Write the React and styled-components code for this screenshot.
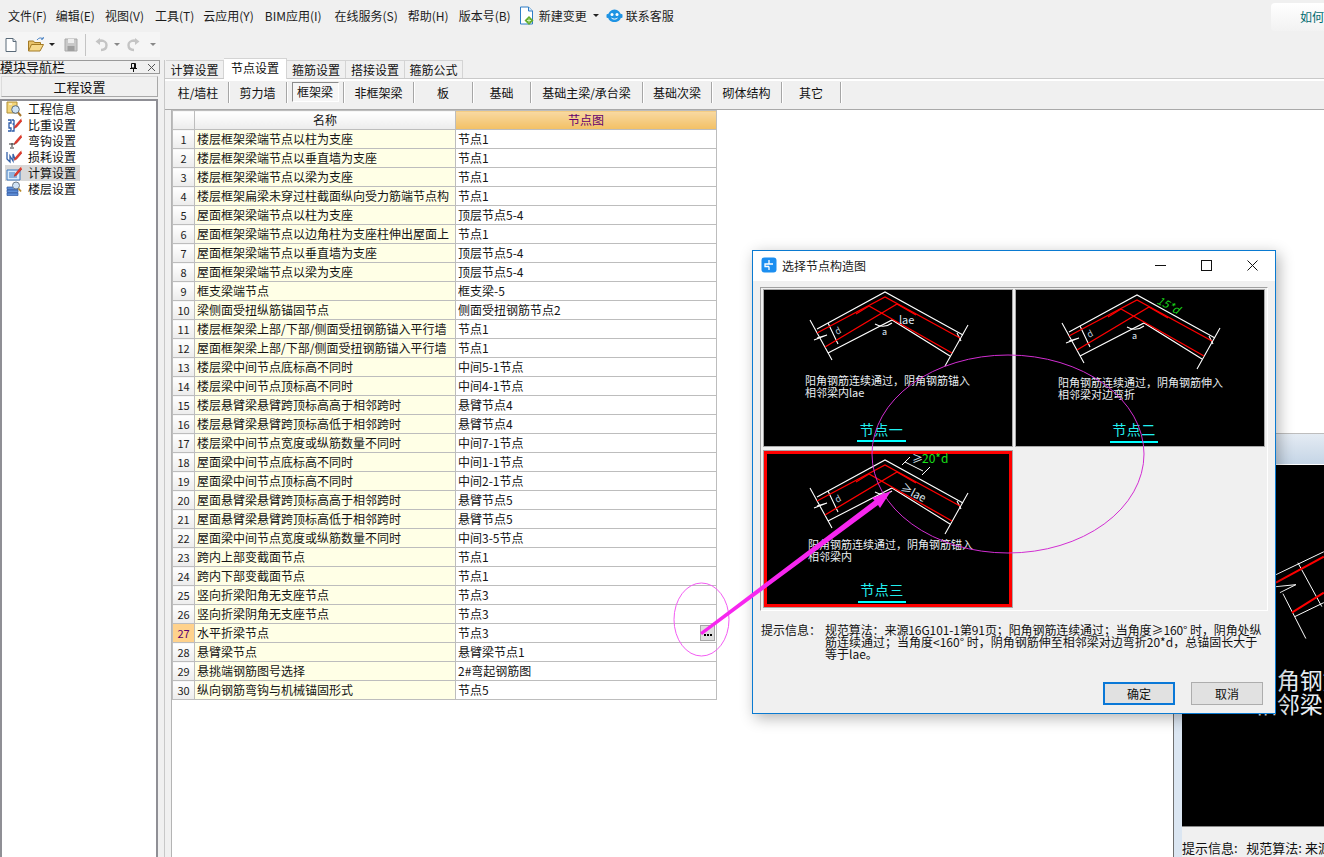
import React from "react";
import styled, { createGlobalStyle } from "styled-components";

const CJK = `"Noto Sans CJK SC", "Liberation Sans", sans-serif`;

const Global = createGlobalStyle`
  html, body { margin: 0; padding: 0; background: #f0f0f0; }
  body { font-family: ${CJK}; font-size: 12px; color: #111; }
  * { box-sizing: border-box; }
`;

const Page = styled.div`
  position: relative;
  width: 1324px;
  height: 857px;
  overflow: hidden;
  background: #f0f0f0;
  display: flex;
  flex-direction: column;
`;

/* ---------- menu ---------- */
const MenuBar = styled.div`
  height: 31px;
  flex: none;
  display: flex;
  align-items: center;
  padding-left: 8px;
  line-height: 16px;
`;
const MenuItem = styled.span`
  margin-right: ${(p) => p.$gap ?? 11}px;
  white-space: nowrap;
  color: #1c1c1c;
`;
const MenuIcon = styled.span`
  display: inline-flex;
  margin-right: ${(p) => p.$gap ?? 5}px;
`;
const HowTo = styled.div`
  margin-left: auto;
  width: 53px;
  height: 28px;
  margin-top: 2px;
  border-radius: 4px 0 0 4px;
  background: linear-gradient(#ffffff, #f2f2f2);
  color: #006b70;
  padding: 6px 0 0 29px;
  white-space: nowrap;
  overflow: hidden;
`;
const ToolRow = styled.div`
  height: 29px;
  flex: none;
  padding-top: 1px;
`;
const ToolBar = styled.div`
  width: 160px;
  height: 25px;
  background: #f5f5f5;
  display: flex;
  align-items: center;
  padding-left: 3px;
`;
const ToolSpacer = styled.span`
  width: 8px;
  flex: none;
`;
const ToolSep = styled.span`
  width: 1px;
  height: 22px;
  background: #c4c4c4;
  margin: 0 7px 0 6px;
`;
const Caret = styled.span`
  width: 0;
  height: 0;
  border-left: 3px solid transparent;
  border-right: 3px solid transparent;
  border-top: 3px solid ${(p) => p.$color || "#222"};
  margin: ${(p) => p.$m || "0 8px 0 4px"};
`;

/* ---------- workspace ---------- */
const Workspace = styled.div`
  flex: 1;
  display: flex;
  min-height: 0;
`;
const Nav = styled.div`
  width: 160px;
  flex: none;
  display: flex;
  flex-direction: column;
`;
const NavHeader = styled.div`
  height: 14px;
  border: 1px solid #9a9a9a;
  border-width: 1px 1px 1px 0;
  display: flex;
  align-items: center;
  font-size: 13px;
  line-height: 12px;
  padding-right: 3px;
  white-space: nowrap;
`;
const NavHeaderBtns = styled.span`
  margin-left: auto;
  display: flex;
  align-items: center;
  gap: 9px;
`;
const NavTitleBtn = styled.div`
  height: 21px;
  margin: 2px 2px 2px 1px;
  border: 1px solid #a8a8a8;
  border-top-color: #dcdcdc;
  border-left-color: #dcdcdc;
  background: #f0f0f0;
  text-align: center;
  font-size: 13px;
  line-height: 19px;
`;
const Tree = styled.div`
  flex: 1;
  margin-right: 2px;
  background: #fff;
  border: 2px solid #8f8f95;
  border-bottom: none;
  padding: 0 0 0 3px;
`;
const TreeRow = styled.div`
  height: 16px;
  display: flex;
  align-items: center;
  gap: 6px;
  width: 75px;
  line-height: 16px;
  padding-left: 1px;
  background: ${(p) => (p.$selected ? "#d9d9d9" : "transparent")};
  white-space: nowrap;
`;
const Gutter = styled.div`
  width: 5px;
  flex: none;
  border-right: 1px solid #c8c8c8;
`;
const Main = styled.div`
  flex: 1;
  min-width: 0;
  display: flex;
  flex-direction: column;
`;
const TabStrip = styled.div`
  height: 19px;
  flex: none;
  display: flex;
  align-items: flex-end;
  padding-left: 1px;
  border-bottom: 1px solid #c9c9c9;
`;
const Tab = styled.div`
  width: ${(p) => p.$w}px;
  height: ${(p) => (p.$active ? 21 : 18)}px;
  margin-bottom: ${(p) => (p.$active ? -1 : 0)}px;
  border: 1px solid #d4d4d4;
  border-width: 1px 1px 0 0;
  background: ${(p) => (p.$active ? "#fff" : "#f0f0f0")};
  text-align: center;
  line-height: 17px;
  position: relative;
  white-space: nowrap;
`;
const SubBar = styled.div`
  height: 31px;
  flex: none;
  border-top: 2px solid #fff;
  border-bottom: 1px solid #a9a9a9;
  display: flex;
  padding-left: 3px;
  padding-top: 1px;
`;
const SubTab = styled.div`
  width: ${(p) => p.$w}px;
  height: 21px;
  border-right: 1px solid #a6a6a6;
  box-shadow: 1px 0 0 #fff;
  text-align: center;
  line-height: 21px;
  white-space: nowrap;
`;
const Pressed = styled.div`
  width: 47px;
  height: 20px;
  margin: 0 auto;
  border: 1px solid #8c8c8c;
  border-right-color: #fff;
  border-bottom-color: #fff;
  background: #f6f6f6;
  line-height: 18px;
`;
const Content = styled.div`
  flex: 1;
  display: flex;
  min-height: 0;
`;
const ContentStrip = styled.div`
  width: 7px;
  flex: none;
  border-right: 1px solid #b4b4b4;
`;
const Sheet = styled.div`
  flex: 1;
  background: #fff;
`;

/* ---------- table ---------- */
const Grid = styled.table`
  border-collapse: collapse;
  table-layout: fixed;
  width: 545px;
  color: #141414;
  td, th {
    border: 1px solid #bdbdbd;
    height: 19px;
    padding: 0 0 1px;
    font-weight: 400;
    line-height: 16px;
    white-space: nowrap;
    overflow: hidden;
  }
`;
const HeadIdx = styled.th`
  width: 22px;
  background: linear-gradient(#fff, #ececec);
`;
const HeadName = styled.th`
  width: 261px;
  background: linear-gradient(#fff, #ececec);
`;
const HeadNode = styled.th`
  width: 261px;
  background: linear-gradient(#f8d9a2, #f2c064);
  color: #64006e;
`;
const Idx = styled.td`
  text-align: center;
  font-size: 11px;
  color: ${(p) => (p.$selected ? "#5a0070" : "#222")};
  background: ${(p) =>
    p.$selected ? "#ffd28c" : "linear-gradient(#fff, #ececec)"};
`;
const Name = styled.td`
  background: #ffffe6;
  padding-left: 2px !important;
`;
const Val = styled.td`
  background: #fff;
  padding-left: 2px !important;
  position: relative;
`;
const DotsBtn = styled.span`
  position: absolute;
  right: 1px;
  top: 1px;
  width: 15px;
  height: 16px;
  background: #dedede;
  border: 1px solid #a8a8a8;
  display: flex;
  align-items: center;
  justify-content: center;
  gap: 1px;
  i {
    width: 2px;
    height: 2px;
    background: #000;
    display: block;
    margin-top: 3px;
  }
`;

/* ---------- window behind ---------- */
const BackWindow = styled.div`
  position: absolute;
  left: 1173px;
  top: 433px;
  width: 151px;
  height: 424px;
  border-left: 1px solid #6f6f6f;
  border-top: 1px solid #bdbdbd;
  background: #dbe6f2;
  display: flex;
  flex-direction: column;
`;
const BackTitle = styled.div`
  height: 31px;
  flex: none;
  background: linear-gradient(#e4ebf3, #c5d5e6);
  border-bottom: 1px solid #fff;
`;
const BackBody = styled.div`
  flex: 1;
  min-height: 0;
  display: flex;
`;
const BackSide = styled.div`
  width: 8px;
  flex: none;
  background: #dbe6f2;
`;
const BackCanvas = styled.div`
  flex: 1;
  min-width: 0;
  display: flex;
  flex-direction: column;
`;
const BackImage = styled.svg`
  display: block;
  width: 142px;
  height: 362px;
  flex: none;
  background: #000;
  border-bottom: 1px solid #888;
`;
const BackInfo = styled.div`
  flex: 1;
  background: #f0f0f0;
  font-size: 13px;
  line-height: 16px;
  white-space: pre;
  padding: 13px 0 0 0;
  overflow: hidden;
  color: #111;
`;

/* ---------- dialog ---------- */
const Dialog = styled.div`
  position: absolute;
  left: 752px;
  top: 250px;
  width: 524px;
  height: 464px;
  background: #f0f0f0;
  border: 1px solid #0a7ad1;
  box-shadow: 3px 4px 14px rgba(0, 0, 0, 0.3);
  display: flex;
  flex-direction: column;
`;
const TitleBar = styled.div`
  height: 30px;
  flex: none;
  background: #fff;
  display: flex;
  align-items: center;
  padding: 0 0 2px 8px;
  gap: 5px;
`;
const TitleText = styled.span`
  color: #1a1a1a;
`;
const WinBtns = styled.div`
  margin-left: auto;
  display: flex;
  align-items: center;
  height: 100%;
`;
const WinBtn = styled.span`
  width: 46px;
  display: flex;
  justify-content: center;
`;
const Gallery = styled.div`
  margin: 6px 7px 0;
  height: 324px;
  border: 1px solid;
  border-color: #a0a0a0 #fff #fff #a0a0a0;
  padding: 2px 3px;
  display: grid;
  grid-template-columns: 248px 248px;
  grid-template-rows: 156px 156px;
  gap: 5px 4px;
  flex: none;
`;
const Cell = styled.div`
  background: #000;
  box-shadow: ${(p) =>
    p.$selected
      ? "inset 0 0 0 3px #ff0000, 0 0 0 1px #a8a8a8"
      : "0 0 0 1px #a8a8a8"};
`;
const CellSvg = styled.svg`
  display: block;
  width: 248px;
  height: 156px;
  text {
    font-family: ${CJK};
  }
`;
const Hint = styled.div`
  display: flex;
  margin: 13px 0 0 8px;
  line-height: 12px;
`;
const HintLabel = styled.div`
  width: 64px;
  flex: none;
`;
const HintBody = styled.div`
  white-space: nowrap;
`;
const HintLine = styled.div`
  letter-spacing: ${(p) => p.$spacing || 0}px;
`;
const Footer = styled.div`
  margin-top: auto;
  padding: 0 12px 8px 0;
  display: flex;
  justify-content: flex-end;
  gap: 16px;
`;
const DlgBtn = styled.div`
  width: 72px;
  height: 23px;
  background: #e1e1e1;
  border: ${(p) => (p.$primary ? "2px solid #0a78d7" : "1px solid #adadad")};
  text-align: center;
  line-height: ${(p) => (p.$primary ? 19 : 21)}px;
  color: #111;
`;

const Annotations = styled.svg`
  position: absolute;
  left: 0;
  top: 0;
  width: 1324px;
  height: 857px;
  pointer-events: none;
`;

/* ---------- icons ---------- */
const Svg = ({ s = 16, w, h, children }) => (
  <svg width={w || s} height={h || s} viewBox={`0 0 ${w || s} ${h || s}`} style={{ display: "block", flex: "none" }}>
    {children}
  </svg>
);

const NewFile = () => (
  <Svg>
    <path d="M3 1.5h7l3 3v10H3z" fill="#fff" stroke="#5a6a78" />
    <path d="M10 1.5v3h3" fill="#dfe6ee" stroke="#5a6a78" />
  </Svg>
);
const OpenFolder = () => (
  <Svg s={18}>
    <path d="M1.5 15V5h5l1 1.5h6V9" fill="#e8c26a" stroke="#a37a25" />
    <path d="M1.5 15l3-6.5h12L13 15z" fill="#f6d98c" stroke="#a37a25" />
    <path d="M10 4c2-2.5 4-2.5 6-1M16 3l.3-2M16 3l-2 .2" fill="none" stroke="#3a78c0" />
  </Svg>
);
const SaveIcon = () => (
  <Svg>
    <path d="M2 2h12v12H2z" fill="#c9c9c9" stroke="#a9a9a9" />
    <path d="M5 2h6v4H5z" fill="#eee" />
    <path d="M4.5 9h7v5h-7z" fill="#9f9f9f" />
  </Svg>
);
const Undo = ({ flip }) => (
  <Svg>
    <g transform={flip ? "translate(16 0) scale(-1 1)" : undefined}>
      <path d="M8 13c4 0 5.5-2.5 5.5-5S11 3.5 8 3.5L6 4.5" fill="none" stroke="#c4c4c4" strokeWidth="2.4" />
      <path d="M7 1v7L2.5 4.5z" fill="#c4c4c4" />
    </g>
  </Svg>
);
const Pencil = () => (
  <g>
    <path d="M9 9l6-7 1.5 1.3-6 7-2.2 1z" fill="#e8392c" stroke="#a81d14" strokeWidth=".5" />
    <path d="M14.5 2.6l1-1.2 1.3 1.2-1 1.2z" fill="#f3b9a5" />
  </g>
);
const InfoIco = () => (
  <Svg>
    <path d="M1 1h10v11H1z" fill="#f4d67a" stroke="#b08e36" />
    <circle cx="9.5" cy="8.5" r="3.8" fill="#cfe4f5" stroke="#5b6b7b" />
    <path d="M12 11.5l3 3.5" stroke="#a8762a" strokeWidth="2" />
    <path d="M3 3h3" stroke="#fff" />
  </Svg>
);
const WeightIco = () => (
  <Svg>
    <path d="M2 3h3v3H3v5h2v3H2M8 3H6M8 3v4H6.5M8 7v7H6" fill="none" stroke="#2b5aa8" strokeWidth="1.3" />
    <Pencil />
  </Svg>
);
const HookIco = () => (
  <Svg>
    <path d="M6 10v4M4 15h4M3 11h6" fill="none" stroke="#333" />
    <Pencil />
  </Svg>
);
const LossIco = () => (
  <Svg>
    <path d="M1 3v7l3 3V7l3 5V5l2 5" fill="none" stroke="#3561a8" strokeWidth="1.3" />
    <Pencil />
  </Svg>
);
const CalcIco = () => (
  <Svg>
    <path d="M1 5h13v10H1z" fill="#d9ebfb" stroke="#3d79bf" />
    <path d="M3 8h6M3 10h8M3 12h8" stroke="#3d79bf" />
    <Pencil />
  </Svg>
);
const FloorIco = () => (
  <Svg>
    <path d="M1 6h11v2.5H1zM1 9h11v2.5H1zM1 12h11v2.5H1z" fill="#5f8fd8" stroke="#2c58a5" strokeWidth=".7" />
    <circle cx="10" cy="4.5" r="3.5" fill="#cfe2f5" stroke="#6c7a88" />
    <path d="M12.5 7.5l2.5 3" stroke="#b88a2a" strokeWidth="1.8" />
  </Svg>
);
const DocGreen = () => (
  <Svg w={15} h={20}>
    <path d="M1.5 1h8l4 4v13h-12z" fill="#fff" stroke="#2e7dc6" />
    <path d="M9.5 1v4h4" fill="#d3e6f6" stroke="#2e7dc6" />
    <path d="M10 10l4.5 4.5L10 19l-4.5-4.5z" fill="#65ad2e" />
    <path d="M10 12.5v4M8 14.5h4" stroke="#d6f0bd" />
  </Svg>
);
const BlueBot = () => (
  <Svg w={17} h={17}>
    <path d="M2 9a6.5 6.5 0 0 1 13 0c0 3.5-2 6-6.5 6S2 12.5 2 9z" fill="#1f93e3" />
    <rect x="0.5" y="7" width="2.5" height="4" rx="1" fill="#1f93e3" />
    <rect x="14" y="7" width="2.5" height="4" rx="1" fill="#1f93e3" />
    <circle cx="6" cy="7.5" r="1.5" fill="#fff" />
    <circle cx="11" cy="7.5" r="1.5" fill="#fff" />
    <path d="M5.5 11c1.5 1.5 4.5 1.5 6 0" fill="none" stroke="#fff" />
  </Svg>
);
const PinIco = () => (
  <Svg s={9}>
    <path d="M2.5 0.5h4v4.5h-4zM1 5.5h7M4.5 5.5V9M5.5 1v4" fill="none" stroke="#111" />
  </Svg>
);
const CloseSmall = () => (
  <Svg s={9}>
    <path d="M1 1l7 7M8 1L1 8" stroke="#555" />
  </Svg>
);
const DlgLogo = () => (
  <Svg>
    <rect x=".5" y=".5" width="15" height="15" rx="3" fill="#1b8ef0" />
    <path d="M8 3v4H4v2.5h4M8 9.5V13M8 7h4" fill="none" stroke="#fff" strokeWidth="1.3" />
  </Svg>
);

/* ---------- node drawings ---------- */
const BEAMS = {
  1: { x: 0, y: -3 },
  2: { x: 0, y: 0 },
  3: { x: 0, y: 4 },
};

const BeamLines = ({ dx, dy }) => (
  <g transform={`translate(${dx} ${dy})`} fill="none">
    <g stroke="#fff" strokeWidth="1.1">
      <path d="M53 42L121 5L199 48" />
      <path d="M64 66L128 33L186 69" />
      <path d="M46 33L68 73M64 36L74 57M204 38L181 79" />
      <path d="M50 53L63 48L53 51M193 46L197 54" />
      <path d="M111 37Q120 42 128 36" />
    </g>
    <g stroke="#ff0000" strokeWidth="1.3">
      <path d="M53 46L121 10L196 51" />
      <path d="M61 60L133 17L152 28" />
      <path d="M92 27L105 19L188 66" />
    </g>
    <text x="73" y="48" fontSize="9" fill="#bcd" transform="rotate(-28 73 48)">d</text>
  </g>
);

const NodeDrawing = ({ id, lines, title, tx, ty, ux, uw, uy, titleY, extra, lineStep }) => (
  <CellSvg viewBox="0 0 248 156">
    <BeamLines dx={BEAMS[id].x} dy={BEAMS[id].y} />
    {extra}
    {lines.map((l, i) => (
      <text key={l} x={tx} y={ty + i * lineStep} fontSize="11" fill="#e9eef2">
        {l}
      </text>
    ))}
    <text x={ux + uw / 2} y={titleY} fontSize="14" fill="#22f0f0" textAnchor="middle" letterSpacing="0.5">
      {title}
    </text>
    <rect x={ux} y={uy} width={uw} height="2" fill="#00ffff" />
  </CellSvg>
);

const rows = [
  ["楼层框架梁端节点以柱为支座", "节点1"],
  ["楼层框架梁端节点以垂直墙为支座", "节点1"],
  ["楼层框架梁端节点以梁为支座", "节点1"],
  ["楼层框架扁梁未穿过柱截面纵向受力筋端节点构", "节点1"],
  ["屋面框架梁端节点以柱为支座", "顶层节点5-4"],
  ["屋面框架梁端节点以边角柱为支座柱伸出屋面上", "节点1"],
  ["屋面框架梁端节点以垂直墙为支座", "顶层节点5-4"],
  ["屋面框架梁端节点以梁为支座", "顶层节点5-4"],
  ["框支梁端节点", "框支梁-5"],
  ["梁侧面受扭纵筋锚固节点", "侧面受扭钢筋节点2"],
  ["楼层框架梁上部/下部/侧面受扭钢筋锚入平行墙", "节点1"],
  ["屋面框架梁上部/下部/侧面受扭钢筋锚入平行墙", "节点1"],
  ["楼层梁中间节点底标高不同时", "中间5-1节点"],
  ["楼层梁中间节点顶标高不同时", "中间4-1节点"],
  ["楼层悬臂梁悬臂跨顶标高高于相邻跨时", "悬臂节点4"],
  ["楼层悬臂梁悬臂跨顶标高低于相邻跨时", "悬臂节点4"],
  ["楼层梁中间节点宽度或纵筋数量不同时", "中间7-1节点"],
  ["屋面梁中间节点底标高不同时", "中间1-1节点"],
  ["屋面梁中间节点顶标高不同时", "中间2-1节点"],
  ["屋面悬臂梁悬臂跨顶标高高于相邻跨时", "悬臂节点5"],
  ["屋面悬臂梁悬臂跨顶标高低于相邻跨时", "悬臂节点5"],
  ["屋面梁中间节点宽度或纵筋数量不同时", "中间3-5节点"],
  ["跨内上部变截面节点", "节点1"],
  ["跨内下部变截面节点", "节点1"],
  ["竖向折梁阳角无支座节点", "节点3"],
  ["竖向折梁阴角无支座节点", "节点3"],
  ["水平折梁节点", "节点3"],
  ["悬臂梁节点", "悬臂梁节点1"],
  ["悬挑端钢筋图号选择", "2#弯起钢筋图"],
  ["纵向钢筋弯钩与机械锚固形式", "节点5"],
];

const menus = [
  ["文件(F)", 9],
  ["编辑(E)", 10],
  ["视图(V)", 11],
  ["工具(T)", 9],
  ["云应用(Y)", 11],
  ["BIM应用(I)", 13],
  ["在线服务(S)", 10],
  ["帮助(H)", 10],
  ["版本号(B)", 8],
];
const tabs = [
  ["计算设置", 58],
  ["节点设置", 63, true],
  ["箍筋设置", 59],
  ["搭接设置", 59],
  ["箍筋公式", 58],
];
const subs = [
  ["柱/墙柱", 61],
  ["剪力墙", 58],
  ["框架梁", 57, true],
  ["非框架梁", 70],
  ["板", 59],
  ["基础", 58],
  ["基础主梁/承台梁", 112],
  ["基础次梁", 69],
  ["砌体结构", 70],
  ["其它", 59],
];
const tree = [
  ["工程信息", InfoIco],
  ["比重设置", WeightIco],
  ["弯钩设置", HookIco],
  ["损耗设置", LossIco],
  ["计算设置", CalcIco, true],
  ["楼层设置", FloorIco],
];

export default function App() {
  return (
    <Page>
      <Global />
      <MenuBar>
        {menus.map(([m, g]) => (
          <MenuItem key={m} $gap={g}>{m}</MenuItem>
        ))}
        <MenuIcon><DocGreen /></MenuIcon>
        <MenuItem $gap={0}>新建变更</MenuItem>
        <Caret $m="0 7px 0 6px" />
        <MenuIcon $gap={3}><BlueBot /></MenuIcon>
        <MenuItem $gap={0}>联系客服</MenuItem>
        <HowTo>如何</HowTo>
      </MenuBar>
      <ToolRow>
        <ToolBar>
          <NewFile />
          <ToolSpacer />
          <OpenFolder />
          <Caret $m="0 8px 0 4px" />
          <SaveIcon />
          <ToolSep />
          <Undo />
          <Caret $color="#888" $m="0 6px 0 5px" />
          <Undo flip />
          <Caret $color="#888" $m="0 0 0 8px" />
        </ToolBar>
      </ToolRow>
      <Workspace>
        <Nav>
          <NavHeader>
            模块导航栏
            <NavHeaderBtns>
              <PinIco />
              <CloseSmall />
            </NavHeaderBtns>
          </NavHeader>
          <NavTitleBtn>工程设置</NavTitleBtn>
          <Tree>
            {tree.map(([t, I, sel]) => (
              <TreeRow key={t} $selected={sel}>
                <I />
                {t}
              </TreeRow>
            ))}
          </Tree>
        </Nav>
        <Gutter />
        <Main>
          <TabStrip>
            {tabs.map(([t, w, a]) => (
              <Tab key={t} $w={w} $active={a}>{t}</Tab>
            ))}
          </TabStrip>
          <SubBar>
            {subs.map(([t, w, p]) => (
              <SubTab key={t} $w={w}>
                {p ? <Pressed>{t}</Pressed> : t}
              </SubTab>
            ))}
          </SubBar>
          <Content>
            <ContentStrip />
            <Sheet>
              <Grid>
                <thead>
                  <tr>
                    <HeadIdx />
                    <HeadName>名称</HeadName>
                    <HeadNode>节点图</HeadNode>
                  </tr>
                </thead>
                <tbody>
                  {rows.map(([n, v], i) => (
                    <tr key={i}>
                      <Idx $selected={i === 26}>{i + 1}</Idx>
                      <Name>{n}</Name>
                      <Val>
                        {v}
                        {i === 26 && (
                          <DotsBtn>
                            <i />
                            <i />
                            <i />
                          </DotsBtn>
                        )}
                      </Val>
                    </tr>
                  ))}
                </tbody>
              </Grid>
            </Sheet>
          </Content>
        </Main>
      </Workspace>

      <BackWindow>
        <BackTitle />
        <BackBody>
          <BackSide />
          <BackCanvas>
            <BackImage viewBox="1182 465 142 362">
              <g stroke="#fff" strokeWidth="1" fill="none">
                <path d="M1276 575L1324 552M1295 617L1324 603" />
                <path d="M1298 563L1322 607M1283 594L1306 639" />
                <path d="M1276 587L1296 585L1280 593" />
              </g>
              <path d="M1276 583L1324 557M1292 613L1324 593" stroke="#f00" strokeWidth="2" fill="none" />
              <text x="1254" y="690" fontSize="23" fill="#e6eef4" fontFamily={CJK}>阳角钢筋</text>
              <text x="1254" y="714" fontSize="23" fill="#e6eef4" fontFamily={CJK}>相邻梁内</text>
            </BackImage>
            <BackInfo>{"提示信息:   规范算法: 来源16G101"}</BackInfo>
          </BackCanvas>
        </BackBody>
      </BackWindow>

      <Dialog>
        <TitleBar>
          <DlgLogo />
          <TitleText>选择节点构造图</TitleText>
          <WinBtns>
            <WinBtn>
              <Svg s={11}><path d="M0 5.5h11" stroke="#111" /></Svg>
            </WinBtn>
            <WinBtn>
              <Svg s={11}><rect x=".5" y=".5" width="10" height="10" fill="none" stroke="#111" /></Svg>
            </WinBtn>
            <WinBtn>
              <Svg s={11}><path d="M.5.5l10 10M10.5.5l-10 10" stroke="#111" /></Svg>
            </WinBtn>
          </WinBtns>
        </TitleBar>
        <Gallery>
          <Cell>
            <NodeDrawing
              id={1}
              lineStep={12}
              tx={41}
              ty={95}
              ux={93}
              uw={49}
              uy={150}
              titleY={145}
              title="节点一"
              lines={["阳角钢筋连续通过，阴角钢筋锚入", "相邻梁内lae"]}
              extra={
                <g>
                  <text x="135" y="34" fontSize="11" fill="#dfeaf5">lae</text>
                  <text x="118" y="45" fontSize="9" fill="#dfeaf5">a</text>
                </g>
              }
            />
          </Cell>
          <Cell>
            <NodeDrawing
              id={2}
              lineStep={12}
              tx={42}
              ty={97}
              ux={94}
              uw={48}
              uy={151}
              titleY={145}
              title="节点二"
              lines={["阳角钢筋连续通过，阴角钢筋伸入", "相邻梁对边弯折"]}
              extra={
                <g>
                  <text x="140" y="13" fontSize="11" fill="#19d019" transform="rotate(28 140 13)" fontStyle="italic">15*d</text>
                  <text x="116" y="49" fontSize="9" fill="#dfeaf5">a</text>
                </g>
              }
            />
          </Cell>
          <Cell $selected>
            <NodeDrawing
              id={3}
              lineStep={12}
              tx={44}
              ty={98}
              ux={94}
              uw={48}
              uy={150}
              titleY={144}
              title="节点三"
              lines={["阳角钢筋连续通过，阴角钢筋锚入", "相邻梁内"]}
              extra={
                <g>
                  <path d="M138 14L146 6M158 24L166 16M141 11L159 20" stroke="#fff" fill="none" />
                  <text x="148" y="12" fontSize="11" fill="#dfeaf5">≥</text>
                  <text x="158" y="12" fontSize="12" fill="#19e019">20*d</text>
                  <text x="136" y="39" fontSize="11" fill="#dfeaf5" transform="rotate(28 136 39)">≥lae</text>
                </g>
              }
            />
          </Cell>
        </Gallery>
        <Hint>
          <HintLabel>提示信息：</HintLabel>
          <HintBody>
            <HintLine $spacing={-0.1}>规范算法：来源16G101-1第91页；阳角钢筋连续通过；当角度≥160° 时，阴角处纵</HintLine>
            <HintLine>筋连续通过；当角度&lt;160° 时，阴角钢筋伸至相邻梁对边弯折20*d，总锚固长大于</HintLine>
            <HintLine>等于lae。</HintLine>
          </HintBody>
        </Hint>
        <Footer>
          <DlgBtn $primary>确定</DlgBtn>
          <DlgBtn>取消</DlgBtn>
        </Footer>
      </Dialog>

      <Annotations viewBox="0 0 1324 857">
        <ellipse cx="1008" cy="454" rx="136" ry="99" fill="none" stroke="#d22ed2" strokeWidth="1" />
        <ellipse cx="701.5" cy="619.5" rx="27.5" ry="36.5" fill="none" stroke="#f35cf3" strokeWidth="1" />
        <path d="M700 632.5L874.5 500.5L872 498L891 491L880 508L878 505L702 635z" fill="#f726ef" />
      </Annotations>
    </Page>
  );
}
